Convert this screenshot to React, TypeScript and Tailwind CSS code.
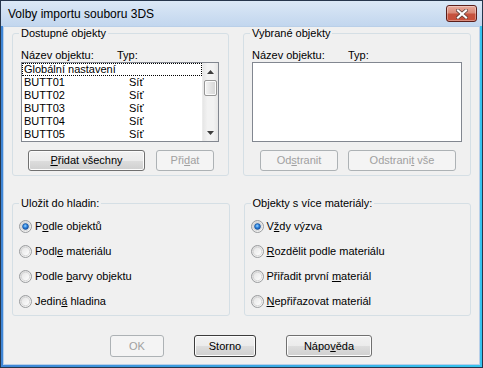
import React from "react";

function U({ children }: { children: React.ReactNode }) {
  return <span className="underline decoration-1 underline-offset-[1px]">{children}</span>;
}

function Btn({
  className,
  children,
  disabled,
  strong,
}: {
  className: string;
  children: React.ReactNode;
  disabled?: boolean;
  strong?: boolean;
}) {
  const base = "flex items-center justify-center rounded-[3px] border leading-[13px] shrink-0";
  const look = disabled
    ? "border-[#adb2b5] bg-[#f4f4f4] text-[#a0a0a0]"
    : (strong ? "border-[#3c3c3c] " : "border-[#707070] ") +
      "bg-[linear-gradient(to_bottom,#f2f2f2_0%,#ebebeb_50%,#dddddd_51%,#cfcfcf_100%)] shadow-[inset_0_0_0_1px_#fcfcfc] text-black";
  return <div className={base + " " + look + " " + className}>{children}</div>;
}

function Radio({ checked }: { checked?: boolean }) {
  return (
    <svg width="13" height="13" viewBox="0 0 13 13" className="shrink-0">
      <defs>
        <linearGradient id="rgOuter" x1="0" y1="0" x2="1" y2="1">
          <stop offset="0" stopColor="#d6d6d6" />
          <stop offset="1" stopColor="#fdfdfd" />
        </linearGradient>
        <linearGradient id="rgInner" x1="0" y1="0" x2="1" y2="1">
          <stop offset="0" stopColor="#e4e4e4" />
          <stop offset="1" stopColor="#ffffff" />
        </linearGradient>
        <radialGradient id="rgDot" cx="0.45" cy="0.4" r="0.65">
          <stop offset="0" stopColor="#9fd6ff" />
          <stop offset="0.45" stopColor="#2f86e0" />
          <stop offset="1" stopColor="#10479c" />
        </radialGradient>
      </defs>
      <circle cx="6.5" cy="6.5" r="6" fill="url(#rgOuter)" stroke="#9a9c9e" strokeWidth="1" />
      <circle cx="6.5" cy="6.5" r="4.2" fill="url(#rgInner)" stroke="#d2d2d2" strokeWidth="0.8" />
      {checked && <circle cx="6.5" cy="6.5" r="3" fill="url(#rgDot)" stroke="#1b4f8f" strokeWidth="0.6" />}
    </svg>
  );
}

function RadioRow({ checked, children }: { checked?: boolean; children: React.ReactNode }) {
  return (
    <div className="h-[25px] flex items-center gap-[3px]">
      <Radio checked={checked} />
      <span className="leading-[13px]">{children}</span>
    </div>
  );
}

function CloseBtn() {
  return (
    <div className="w-[31px] h-[17px] rounded-[3px] border border-[#5b1e1a] bg-[linear-gradient(to_bottom,#e9a99b_0%,#d98a78_45%,#c5523e_55%,#c8503a_100%)] shadow-[inset_0_0_0_1px_rgba(255,255,255,0.35)] flex items-center justify-center">
      <svg width="12" height="10" viewBox="0 0 12 10">
        <path d="M2 1.5 L10 8.5 M10 1.5 L2 8.5" stroke="#5a3a36" strokeWidth="3.6" strokeLinecap="square" />
        <path d="M2 1.5 L10 8.5 M10 1.5 L2 8.5" stroke="#ffffff" strokeWidth="2.2" strokeLinecap="square" />
      </svg>
    </div>
  );
}

function ScrollBar() {
  return (
    <div className="w-[16px] h-full flex flex-col bg-[linear-gradient(to_right,#e6e6e6,#f2f2f2_30%,#f2f2f2_70%,#e6e6e6)] border-l border-[#ececec]">
      <div className="h-[17px] flex items-center justify-center">
        <svg width="7" height="4" viewBox="0 0 7 4">
          <path d="M3.5 0 L7 4 L0 4 Z" fill="#3d3d3d" />
        </svg>
      </div>
      <div className="h-[16px] mx-[1px] rounded-[2px] border border-[#979797] bg-[linear-gradient(to_right,#f4f4f4,#e3e3e3_50%,#d6d6d6)] shadow-[inset_0_0_0_1px_#fafafa]" />
      <div className="flex-1" />
      <div className="h-[17px] flex items-center justify-center">
        <svg width="7" height="4" viewBox="0 0 7 4">
          <path d="M0 0 L7 0 L3.5 4 Z" fill="#3d3d3d" />
        </svg>
      </div>
    </div>
  );
}

const items = ["BUTT01", "BUTT02", "BUTT03", "BUTT04", "BUTT05"];

export default function App() {
  return (
    <div className="w-[483px] h-[368px] flex flex-col border border-[#26364c] bg-[linear-gradient(to_right,#3f86d6,#36c4ef)] font-['Liberation_Sans',Arial,sans-serif] text-[11px] text-black overflow-hidden select-none">
      <div className="h-[25px] shrink-0 flex items-center justify-between pl-[7px] pr-[5px] bg-[linear-gradient(to_bottom,#dbe8f6,#c2d6ee)]">
        <span className="text-[12px] leading-[14px]">Volby importu souboru 3DS</span>
        <CloseBtn />
      </div>
      <div className="flex-1 mx-[2px] mb-[2px] border border-[#b9cfe8] bg-[#f0f0f0] flex flex-col px-[8px]">
        {/* top groups */}
        <div className="flex gap-[14px]">
          <fieldset className="w-[218px] border border-[#d5dfe5] rounded-[3px] px-[8px] pt-[9px] pb-[4px]">
            <legend className="ml-[-2px] px-[2px] leading-[13px]">Dostupné objekty</legend>
            <div className="flex h-[13px] leading-[13px]">
              <span className="w-[96px]">Název objektu:</span>
              <span>Typ:</span>
            </div>
            <div className="w-[198px] h-[80px] border border-[#828790] bg-white flex">
              <div className="flex-1 flex flex-col">
                <div className="h-[13px] leading-[11px] border border-dotted border-black pl-[1px]">Globální nastavení</div>
                {items.map((it) => (
                  <div key={it} className="h-[13px] leading-[13px] flex pl-[2px]">
                    <span className="w-[105px]">{it}</span>
                    <span>Síť</span>
                  </div>
                ))}
              </div>
              <ScrollBar />
            </div>
            <div className="flex gap-[11px] mt-[8px] ml-[7px]">
              <Btn className="w-[117px] h-[21px]">
                <span><U>P</U>řidat všechny</span>
              </Btn>
              <Btn className="w-[58px] h-[21px]" disabled>
                <span>Při<U>d</U>at</span>
              </Btn>
            </div>
          </fieldset>
          <fieldset className="w-[228px] border border-[#d5dfe5] rounded-[3px] px-[8px] pt-[9px] pb-[4px]">
            <legend className="ml-[-2px] px-[2px] leading-[13px]">Vybrané objekty</legend>
            <div className="flex h-[13px] leading-[13px]">
              <span className="w-[96px]">Název objektu:</span>
              <span>Typ:</span>
            </div>
            <div className="w-[210px] h-[80px] border border-[#828790] bg-white" />
            <div className="flex gap-[10px] mt-[8px] ml-[8px]">
              <Btn className="w-[78px] h-[21px]" disabled>
                <span>Od<U>s</U>tranit</span>
              </Btn>
              <Btn className="w-[108px] h-[21px]" disabled>
                <span>Odstrani<U>t</U> vše</span>
              </Btn>
            </div>
          </fieldset>
        </div>

        {/* radio groups */}
        <div className="flex gap-[14px] mt-[21px]">
          <fieldset className="w-[218px] border border-[#d5dfe5] rounded-[3px] pl-[6px] pr-[8px] pt-[4px] pb-[1px]">
            <legend className="ml-[0px] px-[2px] leading-[13px]">Uložit do hladin:</legend>
            <RadioRow checked>
              P<U>o</U>dle objektů
            </RadioRow>
            <RadioRow>
              Podl<U>e</U> materiálu
            </RadioRow>
            <RadioRow>
              Podle <U>b</U>arvy objektu
            </RadioRow>
            <RadioRow>
              Jedin<U>á</U> hladina
            </RadioRow>
          </fieldset>
          <fieldset className="w-[228px] border border-[#d5dfe5] rounded-[3px] pl-[6px] pr-[8px] pt-[4px] pb-[1px]">
            <legend className="ml-[0px] px-[2px] leading-[13px]">Objekty s více materiály:</legend>
            <RadioRow checked>
              V<U>ž</U>dy výzva
            </RadioRow>
            <RadioRow>
              <U>R</U>ozdělit podle materiálu
            </RadioRow>
            <RadioRow>
              Přiřadit první <U>m</U>ateriál
            </RadioRow>
            <RadioRow>
              <U>N</U>epřiřazovat materiál
            </RadioRow>
          </fieldset>
        </div>

        {/* bottom buttons */}
        <div className="flex justify-center gap-[30px] mt-[19px] pr-[1px]">
          <Btn className="w-[54px] h-[22px]" disabled>
            <span>OK</span>
          </Btn>
          <Btn className="w-[62px] h-[22px]" strong>
            <span>Storno</span>
          </Btn>
          <Btn className="w-[86px] h-[22px]">
            <span>Nápo<U>v</U>ěda</span>
          </Btn>
        </div>
      </div>
    </div>
  );
}
